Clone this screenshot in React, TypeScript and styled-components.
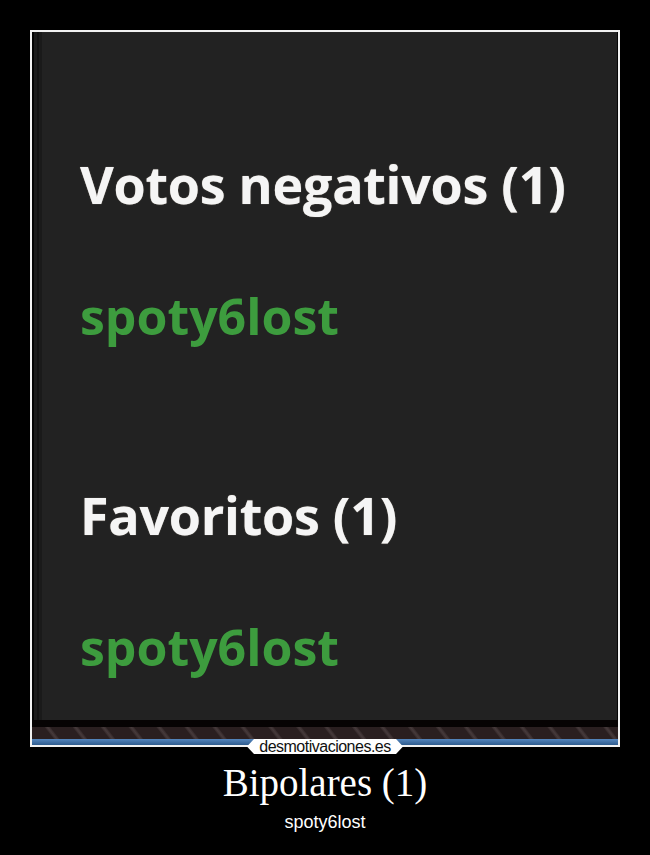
import React from "react";
import styled, { createGlobalStyle } from "styled-components";

const GlobalStyle = createGlobalStyle`
  html, body {
    margin: 0;
    padding: 0;
    background: #000;
  }
`;

const Poster = styled.div`
  width: 650px;
  height: 855px;
  background: #000;
  padding-top: 30px;
  box-sizing: border-box;
  display: flex;
  flex-direction: column;
  align-items: center;
`;

const Frame = styled.div`
  position: relative;
  width: 590px;
  height: 717px;
  border: 2px solid #f2f2f2;
  box-sizing: border-box;
  display: flex;
  flex-direction: column;
  background: #050505;
`;

const Screen = styled.div`
  flex: 1;
  display: flex;
`;

const LeftStrip = styled.div`
  width: 10px;
  background: linear-gradient(to right, #040404 0 2px, #1b1b1b 2px 5px, #121212 5px 7px, #1a1a1a 7px);
`;

const Panel = styled.div`
  flex: 1;
  background: #222222;
  border-top: 1px solid #262626;
  margin-right: 1px;
  padding: 125px 0 0 38px;
  display: flex;
  flex-direction: column;
  gap: 147px;
`;

const Section = styled.div`
  display: flex;
  flex-direction: column;
  gap: 82px;
`;

const Heading = styled.div`
  font-family: "Open Sans", "Noto Sans", sans-serif;
  font-weight: 700;
  font-size: 52px;
  line-height: 51px;
  letter-spacing: -0.25px;
  color: #f5f5f5;
  text-shadow: 0 0 1px rgba(255, 240, 220, 0.6);
  white-space: nowrap;
`;

const UserLink = styled.div`
  font-family: "Open Sans", "Noto Sans", sans-serif;
  font-weight: 700;
  font-size: 50px;
  line-height: 51px;
  color: #3d9c3e;
  white-space: nowrap;
`;

const BottomEdge = styled.div`
  height: 7px;
  background: #060303;
`;

const Stripes = styled.div`
  height: 12px;
  background: repeating-linear-gradient(
    52deg,
    #2a1f20 0 17px,
    #3a2e2f 18px,
    #463a3b 19.5px,
    #3a2e2f 21px,
    #2a1f20 22px
  );
`;

const BlueLine = styled.div`
  height: 6px;
  background: linear-gradient(to bottom, #5586bd, #2f5c8e);
`;

const Logo = styled.div`
  position: absolute;
  left: 50%;
  bottom: -9px;
  transform: translateX(-50%);
  width: 156px;
  height: 15px;
  background: #fff;
  clip-path: polygon(7px 0, calc(100% - 7px) 0, 100% 50%, calc(100% - 7px) 100%, 7px 100%, 0 50%);
  display: flex;
  align-items: center;
  justify-content: center;
  font-family: "Liberation Sans", Arial, sans-serif;
  font-size: 16px;
  line-height: 15px;
  letter-spacing: -0.5px;
  color: #111;
`;

const Title = styled.div`
  margin-top: 16px;
  font-family: "Liberation Serif", "Times New Roman", serif;
  font-size: 39px;
  line-height: 39px;
  color: #fff;
`;

const Subtitle = styled.div`
  margin-top: 11px;
  font-family: "Liberation Sans", Arial, sans-serif;
  font-size: 18px;
  line-height: 18px;
  color: #fff;
`;

const App: React.FC = () => {
  return (
    <>
      <GlobalStyle />
      <Poster>
        <Frame>
          <Screen>
            <LeftStrip />
            <Panel>
              <Section>
                <Heading>Votos negativos (1)</Heading>
                <UserLink>spoty6lost</UserLink>
              </Section>
              <Section>
                <Heading>Favoritos (1)</Heading>
                <UserLink>spoty6lost</UserLink>
              </Section>
            </Panel>
          </Screen>
          <BottomEdge />
          <Stripes />
          <BlueLine />
          <Logo>desmotivaciones.es</Logo>
        </Frame>
        <Title>Bipolares (1)</Title>
        <Subtitle>spoty6lost</Subtitle>
      </Poster>
    </>
  );
};

export default App;
